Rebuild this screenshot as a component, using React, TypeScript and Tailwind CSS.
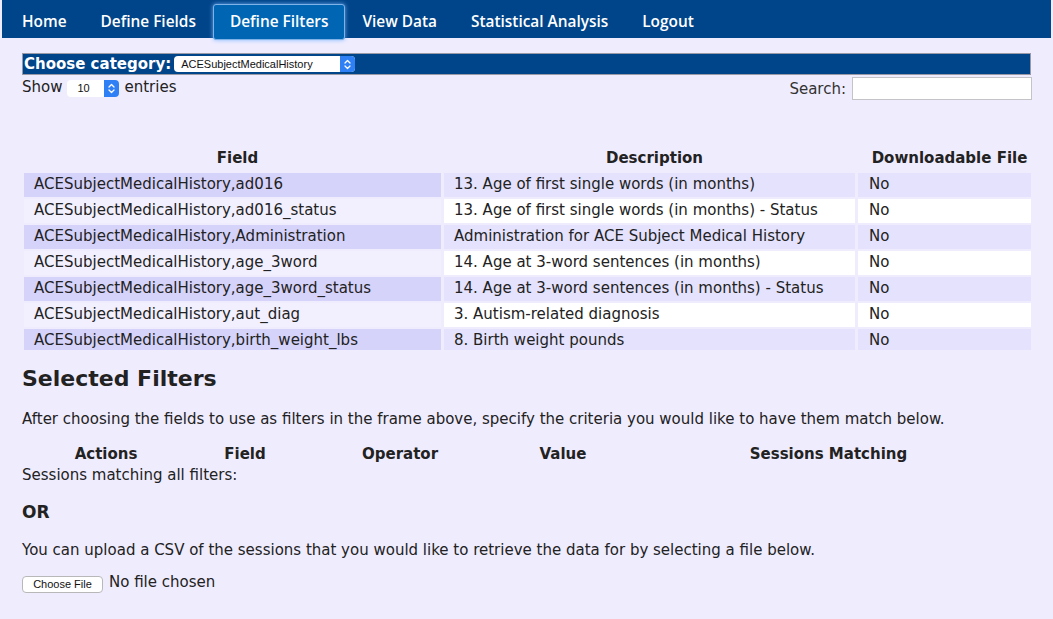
import React from 'react';

const rows = [
  ['ACESubjectMedicalHistory,ad016', '13. Age of first single words (in months)'],
  ['ACESubjectMedicalHistory,ad016_status', '13. Age of first single words (in months) - Status'],
  ['ACESubjectMedicalHistory,Administration', 'Administration for ACE Subject Medical History'],
  ['ACESubjectMedicalHistory,age_3word', '14. Age at 3-word sentences (in months)'],
  ['ACESubjectMedicalHistory,age_3word_status', '14. Age at 3-word sentences (in months) - Status'],
  ['ACESubjectMedicalHistory,aut_diag', '3. Autism-related diagnosis'],
  ['ACESubjectMedicalHistory,birth_weight_lbs', '8. Birth weight pounds'],
];

const navItems = ['Home', 'Define Fields', 'Define Filters', 'View Data', 'Statistical Analysis', 'Logout'];

const Stepper: React.FC = () => (
  <span className="flex h-full w-[15px] items-center justify-center rounded-r-[4px] bg-[#2f7ff5]">
    <svg width="7" height="11" viewBox="0 0 7 11" fill="none" stroke="white" strokeWidth="1.3" strokeLinecap="round" strokeLinejoin="round">
      <path d="M1 4 L3.5 1.5 L6 4" />
      <path d="M1 7 L3.5 9.5 L6 7" />
    </svg>
  </span>
);

const App: React.FC = () => {
  return (
    <div className="min-h-[619px] bg-[#efecfe] text-[#222] font-['DejaVu_Sans',Verdana,sans-serif] text-[15px]">
      {/* Top navigation */}
      <nav className="mx-[2px] flex h-[38px] items-start bg-[#00458a] px-[3px] font-['Open_Sans',sans-serif] text-[15.4px] font-semibold text-white">
        {navItems.map((item) => (
          <a
            key={item}
            className={
              item === 'Define Filters'
                ? 'relative z-10 mt-[4px] flex h-[36px] items-center rounded-[3px] border border-[#7fb2e6] bg-[#0066b4] px-[16px] pb-[1px] shadow-[0_0_4px_rgba(120,180,255,0.9)]'
                : 'mt-[4px] flex h-[36px] items-center px-[17px] pb-[1px]'
            }
          >
            {item}
          </a>
        ))}
      </nav>

      <div className="px-[22px] pt-[15px]">
        {/* Category chooser */}
        <div className="flex h-[22px] items-center border border-[#9a9aa6] bg-[#00458a] pl-[1px]">
          <span className="text-[15px] font-bold leading-none text-white">Choose category:</span>
          <span className="ml-[3px] flex h-[16px] w-[181px] items-center rounded-[4px] bg-white">
            <span className="flex-1 pl-[7px] font-['Liberation_Sans',Arial,sans-serif] text-[11px] leading-none text-[#111]">
              ACESubjectMedicalHistory
            </span>
            <Stepper />
          </span>
        </div>

        {/* Show / search */}
        <div className="flex items-start justify-between">
          <div className="flex items-center pt-[1px]">
            <span>Show</span>
            <span className="mx-[5px] mt-[2px] flex h-[17px] w-[52px] items-center rounded-[4px] bg-white">
              <span className="flex-1 pl-[10px] font-['Liberation_Sans',Arial,sans-serif] text-[11px] leading-none text-[#111]">10</span>
              <Stepper />
            </span>
            <span>entries</span>
          </div>
          <div className="-mr-[1px] flex items-center pt-[1px]">
            <span className="mr-[6px] mt-[2px] text-[#333]">Search:</span>
            <span className="block h-[23px] w-[180px] border border-[#c4c4c8] bg-white" />
          </div>
        </div>

        {/* Fields table (scroll frame, last row partly hidden) */}
        <div className="mt-[46px] h-[203px] overflow-hidden">
          <table className="-ml-[1px] -mt-[2px] w-[1013px] border-separate border-spacing-x-[3px] border-spacing-y-[2px]">
            <thead>
              <tr className="h-[24px]">
                <th className="w-[417px] pl-[10px] font-bold">Field</th>
                <th className="w-[411px] pl-[10px] font-bold">Description</th>
                <th className="pl-[10px] font-bold">Downloadable File</th>
              </tr>
            </thead>
            <tbody>
              {rows.map(([field, desc], i) => (
                <tr key={field} className="h-[24px]">
                  <td className={`pl-[10px] ${i % 2 === 0 ? 'bg-[#d6d3fb]' : 'bg-[#f2f0ff]'}`}>{field}</td>
                  <td className={`pl-[10px] ${i % 2 === 0 ? 'bg-[#e5e2fd]' : 'bg-white'}`}>{desc}</td>
                  <td className={`pl-[11px] ${i % 2 === 0 ? 'bg-[#e5e2fd]' : 'bg-white'}`}>No</td>
                </tr>
              ))}
            </tbody>
          </table>
        </div>

        {/* Selected filters */}
        <h2 className="mt-[18px] text-[22px] font-bold leading-none text-[#222]">Selected Filters</h2>
        <p className="mt-[22px] leading-none">
          After choosing the fields to use as filters in the frame above, specify the criteria you would like to have them match below.
        </p>
        <div className="mt-[20px] grid grid-cols-[168px_110px_200px_126px_1fr] font-bold leading-none">
          <span className="text-center">Actions</span>
          <span className="text-center">Field</span>
          <span className="text-center">Operator</span>
          <span className="text-center">Value</span>
          <span className="text-center">Sessions Matching</span>
        </div>
        <p className="mt-[6px] leading-none">Sessions matching all filters:</p>

        <h3 className="mt-[21px] text-[17px] font-bold leading-none">OR</h3>
        <p className="mt-[22px] leading-none">
          You can upload a CSV of the sessions that you would like to retrieve the data for by selecting a file below.
        </p>
        <div className="mt-[18px] flex items-center">
          <button className="h-[17px] w-[81px] rounded-[4px] border border-[#b8b8b8] bg-white font-['Liberation_Sans',Arial,sans-serif] text-[11px] leading-none text-[#111]">
            Choose File
          </button>
          <span className="ml-[6px] -mt-[5px]">No file chosen</span>
        </div>
      </div>
    </div>
  );
};

export default App;
